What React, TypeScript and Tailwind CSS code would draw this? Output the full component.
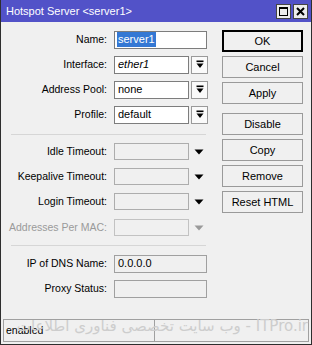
import React from "react";

// Winbox-style "Hotspot Server" dialog

const FONT = { fontFamily: '"Liberation Sans", Arial, sans-serif' };

function DropIcon() {
  return (
    <svg width="8" height="9" viewBox="0 0 8 9">
      <rect x="0.5" y="0.5" width="7" height="1.6" fill="#000" />
      <path d="M0.5 3.5 H7.5 L4 8 Z" fill="#000" />
    </svg>
  );
}

function Tri({ muted }: { muted?: boolean }) {
  return (
    <svg width="10" height="6" viewBox="0 0 10 6">
      <path d="M0.5 0.5 H9.5 L5 5.5 Z" fill={muted ? "#9a9a9a" : "#000"} />
    </svg>
  );
}

function Row({
  label,
  muted,
  children,
}: {
  label: string;
  muted?: boolean;
  children: React.ReactNode;
}) {
  return (
    <div className="flex h-[25px] items-center">
      <div
        className={`w-[107px] shrink-0 text-right pr-[1px] ${
          muted ? "text-[#9a9a9a]" : "text-black"
        }`}
      >
        {label}:
      </div>
      <div className="ml-[6px] flex items-center">{children}</div>
    </div>
  );
}

function Btn({ label, primary }: { label: string; primary?: boolean }) {
  return (
    <div
      className={`flex h-[22px] w-[81px] items-center justify-center bg-[#f0f0f0] text-[11px] text-black ${
        primary
          ? "border border-black shadow-[inset_0_0_0_1px_#000]"
          : "border border-[#9a9a9a]"
      }`}
    >
      {label}
    </div>
  );
}

export default function App() {
  return (
    <div
      className="relative flex h-[345px] w-[312px] flex-col overflow-hidden border-x border-b border-[#2e2e2e] bg-[#f0f0f0] text-[10.5px] leading-none text-black"
      style={FONT}
    >
      {/* title bar */}
      <div className="flex h-[22px] shrink-0 items-center bg-[#5252c8] pl-[5px] pr-[3px]">
        <span className="text-[11px] text-white">Hotspot Server &lt;server1&gt;</span>
        <div className="ml-auto flex gap-[2px]">
          <div className="flex h-[15px] w-[15px] items-center justify-center border border-[#444] bg-[#ececec]">
            <div className="h-[9px] w-[9px] border border-black border-t-2" />
          </div>
          <div className="flex h-[15px] w-[15px] items-center justify-center border border-[#444] bg-[#ececec]">
            <svg width="9" height="9" viewBox="0 0 9 9">
              <path d="M1 1 L8 8 M8 1 L1 8" stroke="#000" strokeWidth="2" />
            </svg>
          </div>
        </div>
      </div>

      <div className="flex flex-1">
        {/* form */}
        <div className="flex w-[210px] flex-col pt-[5px]">
          <Row label="Name">
            <div className="flex h-[18px] w-[93px] items-center border border-[#7d7d7d] bg-white pl-[2px]">
              <span className="bg-[#3478d4] px-[1px] py-[2px] text-[11px] text-white">server1</span>
            </div>
          </Row>
          <Row label="Interface">
            <div className="flex h-[18px] w-[75px] items-center border border-[#7d7d7d] bg-white pl-[3px] text-[11px] italic">
              ether1
            </div>
            <div className="ml-[2px] flex h-[18px] w-[17px] items-center justify-center border border-[#9a9a9a] bg-[#fafafa]">
              <DropIcon />
            </div>
          </Row>
          <Row label="Address Pool">
            <div className="flex h-[18px] w-[75px] items-center border border-[#7d7d7d] bg-white pl-[3px] text-[11px]">
              none
            </div>
            <div className="ml-[2px] flex h-[18px] w-[17px] items-center justify-center border border-[#9a9a9a] bg-[#fafafa]">
              <DropIcon />
            </div>
          </Row>
          <Row label="Profile">
            <div className="flex h-[18px] w-[75px] items-center border border-[#7d7d7d] bg-white pl-[3px] text-[11px]">
              default
            </div>
            <div className="ml-[2px] flex h-[18px] w-[17px] items-center justify-center border border-[#9a9a9a] bg-[#fafafa]">
              <DropIcon />
            </div>
          </Row>

          <div className="ml-[10px] mt-[7px] h-px w-[195px] bg-[#d6d6d6]" />

          <div className="mt-[4px]">
            <Row label="Idle Timeout">
              <div className="h-[17px] w-[75px] border border-[#adadad]" />
              <div className="ml-[5px]"><Tri /></div>
            </Row>
            <Row label="Keepalive Timeout">
              <div className="h-[17px] w-[75px] border border-[#adadad]" />
              <div className="ml-[5px]"><Tri /></div>
            </Row>
            <Row label="Login Timeout">
              <div className="h-[17px] w-[75px] border border-[#adadad]" />
              <div className="ml-[5px]"><Tri /></div>
            </Row>
            <div className="mt-[1px]">
              <Row label="Addresses Per MAC" muted>
                <div className="h-[17px] w-[75px] border border-[#c2c2c2]" />
                <div className="ml-[5px]"><Tri muted /></div>
              </Row>
            </div>
          </div>

          <div className="ml-[10px] mt-[5px] h-px w-[195px] bg-[#d6d6d6]" />

          <div className="mt-[5px]">
            <Row label="IP of DNS Name">
              <div className="flex h-[18px] w-[93px] items-center border border-[#a0a0a0] pl-[3px] text-[11px]">
                0.0.0.0
              </div>
            </Row>
            <Row label="Proxy Status">
              <div className="h-[18px] w-[93px] border border-[#a0a0a0]" />
            </Row>
          </div>
        </div>

        {/* buttons */}
        <div className="ml-[11px] flex flex-col pt-[8px]">
          <div className="flex flex-col gap-[4px]">
            <Btn label="OK" primary />
            <Btn label="Cancel" />
            <Btn label="Apply" />
          </div>
          <div className="mt-[9px] flex flex-col gap-[4px]">
            <Btn label="Disable" />
            <Btn label="Copy" />
            <Btn label="Remove" />
            <Btn label="Reset HTML" />
          </div>
        </div>
      </div>

      {/* status bar */}
      <div className="mx-[2px] mb-[2px] mt-[-1px] flex h-[23px] shrink-0 border border-[#a0a0a0]">
        <div className="flex w-[151px] items-center border-r border-[#a0a0a0] pl-[2px] text-[10.5px]">
          enabled
        </div>
        <div className="flex-1" />
      </div>

      {/* watermark over the status bar */}
      <div
        className="pointer-events-none absolute bottom-[10px] right-[3px] whitespace-nowrap text-[15px] leading-none text-[#cdcdcd]"
        style={{ fontFamily: '"DejaVu Sans", "Liberation Sans", sans-serif' }}
      >
        وب سایت تخصصی فناوری اطلاعات - ITPro.ir
      </div>
    </div>
  );
}
